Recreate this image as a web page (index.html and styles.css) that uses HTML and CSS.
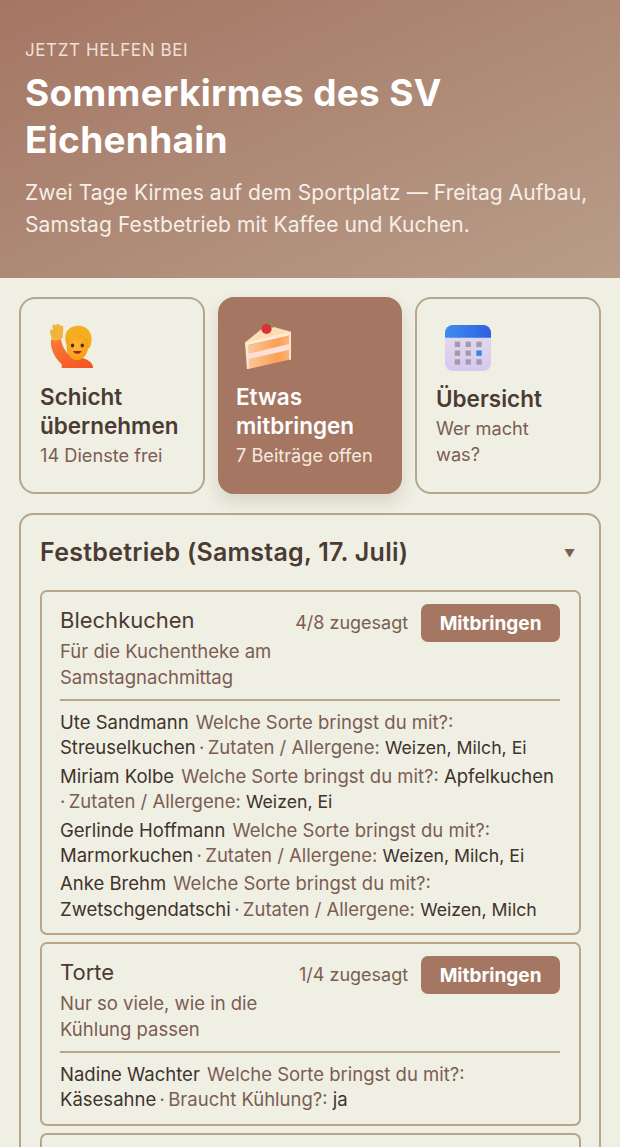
FILE: index.html
```html
<!DOCTYPE html>
<html lang="de">
<head>
    <meta charset="utf-8">
    <title>Sommerkirmes des SV Eichenhain</title>
    <link rel="stylesheet" href="styles.css">
</head>
<body>
    <header class="hero">
        <div class="hero-label">JETZT HELFEN BEI</div>
        <h1 class="hero-title">Sommerkirmes des SV Eichenhain</h1>
        <p class="hero-text">Zwei Tage Kirmes auf dem Sportplatz — Freitag Aufbau, Samstag Festbetrieb mit Kaffee und Kuchen.</p>
    </header>

    <main class="content">
        <nav class="tabs">
            <a class="tab">
                <svg class="tab-icon" viewBox="0 0 48 48">
                    <defs>
                        <linearGradient id="shirt" x1="0" y1="0" x2="1" y2="1">
                            <stop offset="0" stop-color="#fb7a3c"/>
                            <stop offset="1" stop-color="#f4511e"/>
                        </linearGradient>
                        <radialGradient id="face" cx="0.45" cy="0.45" r="0.65">
                            <stop offset="0" stop-color="#fdb92e"/>
                            <stop offset="1" stop-color="#f59a12"/>
                        </radialGradient>
                    </defs>
                    <path d="M2 17 L12 15 C13 23 16 28 21 33 L35 36 C41 38 45 41 45 46 L13 46 L13 42 C6 36 1 26 2 17Z" fill="url(#shirt)"/>
                    <path d="M3 17 L1 9 C0.5 6 3 6 4 8 L3.5 4 C3.5 1 6 1 7 3 C8 0 11 0 11 3 C13 2 15 3 14.5 6 L14 15 C11 18 6 19 3 17Z" fill="#f3b23a"/>
                    <path d="M18 9 C22 1 38 0 42 10 C45 16 43 23 41 26 L39 26 L19 24 C16 19 16 13 18 9Z" fill="#f2b01f"/>
                    <path d="M18 16 C23 16 28 14 31 10 C33 13 36 15 40 16 L40 25 C39 33 34 38 29 38 C23 38 18 32 18 25Z" fill="url(#face)"/>
                    <ellipse cx="24" cy="23" rx="1.7" ry="2.1" fill="#4a2c1a"/>
                    <ellipse cx="34" cy="23" rx="1.7" ry="2.1" fill="#4a2c1a"/>
                    <path d="M24.5 28.5 C26.5 32.5 31.5 32.5 33.5 28.5Z" fill="#a5222f"/>
                </svg>
                <span class="tab-title">Schicht übernehmen</span>
                <span class="tab-sub">14 Dienste frei</span>
            </a>
            <a class="tab tab-active">
                <svg class="tab-icon" viewBox="0 0 48 48">
                    <defs>
                        <linearGradient id="sponge" x1="0" y1="0" x2="1" y2="0">
                            <stop offset="0" stop-color="#fcc99a"/>
                            <stop offset="0.7" stop-color="#fb9f55"/>
                            <stop offset="1" stop-color="#fcb77a"/>
                        </linearGradient>
                    </defs>
                    <path d="M0 20 L22 2 L47 9 L47 13 L0 23Z" fill="#fbdcb4"/>
                    <path d="M2 23 L47 12 L47 37 L3 47Z" fill="url(#sponge)"/>
                    <path d="M2 32 L47 21 L47 27 L2 37Z" fill="#fbdfd8"/>
                    <path d="M0 20 L47 9 L47 12 L1 23Z" fill="#fdebd6"/>
                    <path d="M0 20 L3 22 L4 47 L2 47Z" fill="#fde6d0"/>
                    <path d="M45 10 L47 9 L47 37 L45 38Z" fill="#fde2c8"/>
                    <path d="M24 0 C27 0 29 2 29 5 L26 4Z" fill="#6fa23c"/>
                    <circle cx="22" cy="6" r="5.2" fill="#d8323d"/>
                </svg>
                <span class="tab-title">Etwas mitbringen</span>
                <span class="tab-sub">7 Beiträge offen</span>
            </a>
            <a class="tab">
                <svg class="tab-icon" viewBox="0 0 48 48">
                    <defs>
                        <linearGradient id="calTop" x1="0" y1="0" x2="1" y2="0">
                            <stop offset="0" stop-color="#3d8df0"/>
                            <stop offset="1" stop-color="#2f5fe0"/>
                        </linearGradient>
                        <linearGradient id="calBody" x1="0" y1="0" x2="0" y2="1">
                            <stop offset="0" stop-color="#e6dfea"/>
                            <stop offset="1" stop-color="#d5c8f0"/>
                        </linearGradient>
                    </defs>
                    <rect x="0" y="0" width="47" height="47" rx="8" fill="url(#calBody)"/>
                    <path d="M0 13 V8 A8 8 0 0 1 8 0 H39 A8 8 0 0 1 47 8 V13Z" fill="url(#calTop)"/>
                    <g fill="#a59aab">
                        <rect x="10" y="17" width="5.5" height="5.5"/>
                        <rect x="21" y="17" width="5.5" height="5.5"/>
                        <rect x="32" y="17" width="5.5" height="5.5"/>
                        <rect x="10" y="26" width="5.5" height="5.5"/>
                        <rect x="21" y="26" width="5.5" height="5.5"/>
                        <rect x="10" y="35" width="5.5" height="5.5"/>
                        <rect x="21" y="35" width="5.5" height="5.5"/>
                        <rect x="32" y="35" width="5.5" height="5.5"/>
                    </g>
                    <rect x="32" y="26" width="5.5" height="5.5" fill="#2d8ae6"/>
                </svg>
                <span class="tab-title">Übersicht</span>
                <span class="tab-sub">Wer macht<br>was?</span>
            </a>
        </nav>

        <section class="group">
            <div class="group-head">
                <h2 class="group-title">Festbetrieb (Samstag, 17. Juli)</h2>
                <span class="group-arrow">▼</span>
            </div>

            <article class="item">
                <div class="item-head">
                    <div class="item-info">
                        <div class="item-name">Blechkuchen</div>
                        <div class="item-note">Für die Kuchentheke am Samstagnachmittag</div>
                    </div>
                    <span class="item-count">4/8 zugesagt</span>
                    <button class="btn">Mitbringen</button>
                </div>
                <ul class="people">
                    <li><span class="who">Ute Sandmann</span> <span class="q">Welche Sorte bringst du mit?:</span> Streuselkuchen&thinsp;<span class="q">·&thinsp;Zutaten / Allergene:</span> <span class="val">Weizen, Milch, Ei</span></li>
                    <li><span class="who">Miriam Kolbe</span> <span class="q">Welche Sorte bringst du mit?:</span> Apfelkuchen&thinsp;<span class="q">·&thinsp;Zutaten / Allergene:</span> <span class="val">Weizen, Ei</span></li>
                    <li><span class="who">Gerlinde Hoffmann</span> <span class="q">Welche Sorte bringst du mit?:</span> Marmorkuchen&thinsp;<span class="q">·&thinsp;Zutaten / Allergene:</span> <span class="val">Weizen, Milch, Ei</span></li>
                    <li><span class="who">Anke Brehm</span> <span class="q">Welche Sorte bringst du mit?:</span> Zwetschgendatschi&thinsp;<span class="q">·&thinsp;Zutaten / Allergene:</span> <span class="val">Weizen, Milch</span></li>
                </ul>
            </article>

            <article class="item">
                <div class="item-head">
                    <div class="item-info">
                        <div class="item-name">Torte</div>
                        <div class="item-note">Nur so viele, wie in die Kühlung passen</div>
                    </div>
                    <span class="item-count">1/4 zugesagt</span>
                    <button class="btn">Mitbringen</button>
                </div>
                <ul class="people">
                    <li><span class="who">Nadine Wachter</span> <span class="q">Welche Sorte bringst du mit?:</span> Käsesahne&thinsp;<span class="q">·&thinsp;Braucht Kühlung?:</span> ja</li>
                </ul>
            </article>

            <article class="item"></article>
        </section>
    </main>
</body>
</html>
```

FILE: styles.css
```css
* {
    box-sizing: border-box;
}

html, body {
    height: 1147px;
    overflow: hidden;
}

body {
    margin: 0;
    font-family: 'Inter', 'Liberation Sans', sans-serif;
    background: #f0efe4;
    color: #3f332c;
}

.hero {
    height: 278px;
    padding: 40px 25px 0;
    background: linear-gradient(to bottom right, #a47663 0%, #b89d89 100%);
    color: #fff;
}

.hero-label {
    font-size: 17px;
    line-height: 21px;
    letter-spacing: 0.6px;
    color: #efe0d6;
}

.hero-title {
    margin: 8px 0 14px;
    font-size: 37px;
    line-height: 47px;
    letter-spacing: 0.3px;
    font-weight: 700;
}

.hero-text {
    margin: 0;
    font-size: 21px;
    line-height: 31.5px;
    letter-spacing: 0.08px;
    color: #f6efe8;
}

.content {
    padding: 19px 19px 0;
}

.tabs {
    display: grid;
    grid-template-columns: 186px 184px 186px;
    gap: 13px;
}

.tab {
    display: flex;
    flex-direction: column;
    justify-content: center;
    height: 197px;
    padding: 0 19px;
    border: 2px solid #b5a68c;
    border-radius: 16px;
}

.tab-active {
    padding: 0 16px;
    border-color: #a57763;
    background: #a57763;
    color: #fff;
    box-shadow: 0 8px 16px rgba(90, 60, 40, 0.15);
}

.tab-icon {
    width: 47px;
    height: 47px;
    margin: 0 0 12px 9px;
}

.tab-title {
    font-size: 22.5px;
    line-height: 29px;
    font-weight: 600;
    color: #4b3b33;
}

.tab-active .tab-title {
    color: #fff;
}

.tab-sub {
    margin-top: 2px;
    font-size: 18.2px;
    line-height: 26px;
    color: #7b5d52;
}

.tab-active .tab-sub {
    color: #f6e9df;
}

.group {
    margin-top: 19px;
    padding: 20px 18px 0 19px;
    border: 2px solid #b5a68c;
    border-radius: 14px;
}

.group-head {
    display: flex;
    align-items: center;
    justify-content: space-between;
    height: 35px;
    margin-bottom: 20px;
    padding-right: 6px;
}

.group-title {
    margin: 0;
    font-size: 25px;
    line-height: 35px;
    letter-spacing: 0.25px;
    font-weight: 600;
    color: #4b3b33;
}

.group-arrow {
    font-size: 11px;
    color: #7b5d52;
}

.item {
    margin-bottom: 7px;
    padding: 12px 19px 8px 18px;
    border: 2px solid #b5a68c;
    border-radius: 7px;
}

.item-head {
    display: flex;
    align-items: flex-start;
    padding-bottom: 9px;
    border-bottom: 2px solid #b5a68c;
}

.item-info {
    flex: 1;
    min-width: 0;
}

.item-name {
    margin-top: 1px;
    font-size: 22px;
    line-height: 30px;
    color: #4b3b33;
}

.item-note {
    margin-top: 3px;
    max-width: 230px;
    font-size: 18.5px;
    line-height: 26px;
    color: #7b5d52;
}

.item-count {
    margin-right: 13px;
    font-size: 18px;
    line-height: 38px;
    color: #7b5d52;
}

.btn {
    height: 38px;
    padding: 0 18.5px;
    border: none;
    border-radius: 7px;
    background: #a57763;
    color: #fff;
    font: 700 19px 'Inter', 'Liberation Sans', sans-serif;
}

.people {
    margin: 9px 0 0;
    padding: 0;
    list-style: none;
    font-size: 18.5px;
    line-height: 25.2px;
}

.people li {
    margin-bottom: 3.4px;
}

.who {
    margin-right: 2px;
}

.q {
    color: #7b5d52;
}

.val {
    font-size: 17.7px;
}
```
